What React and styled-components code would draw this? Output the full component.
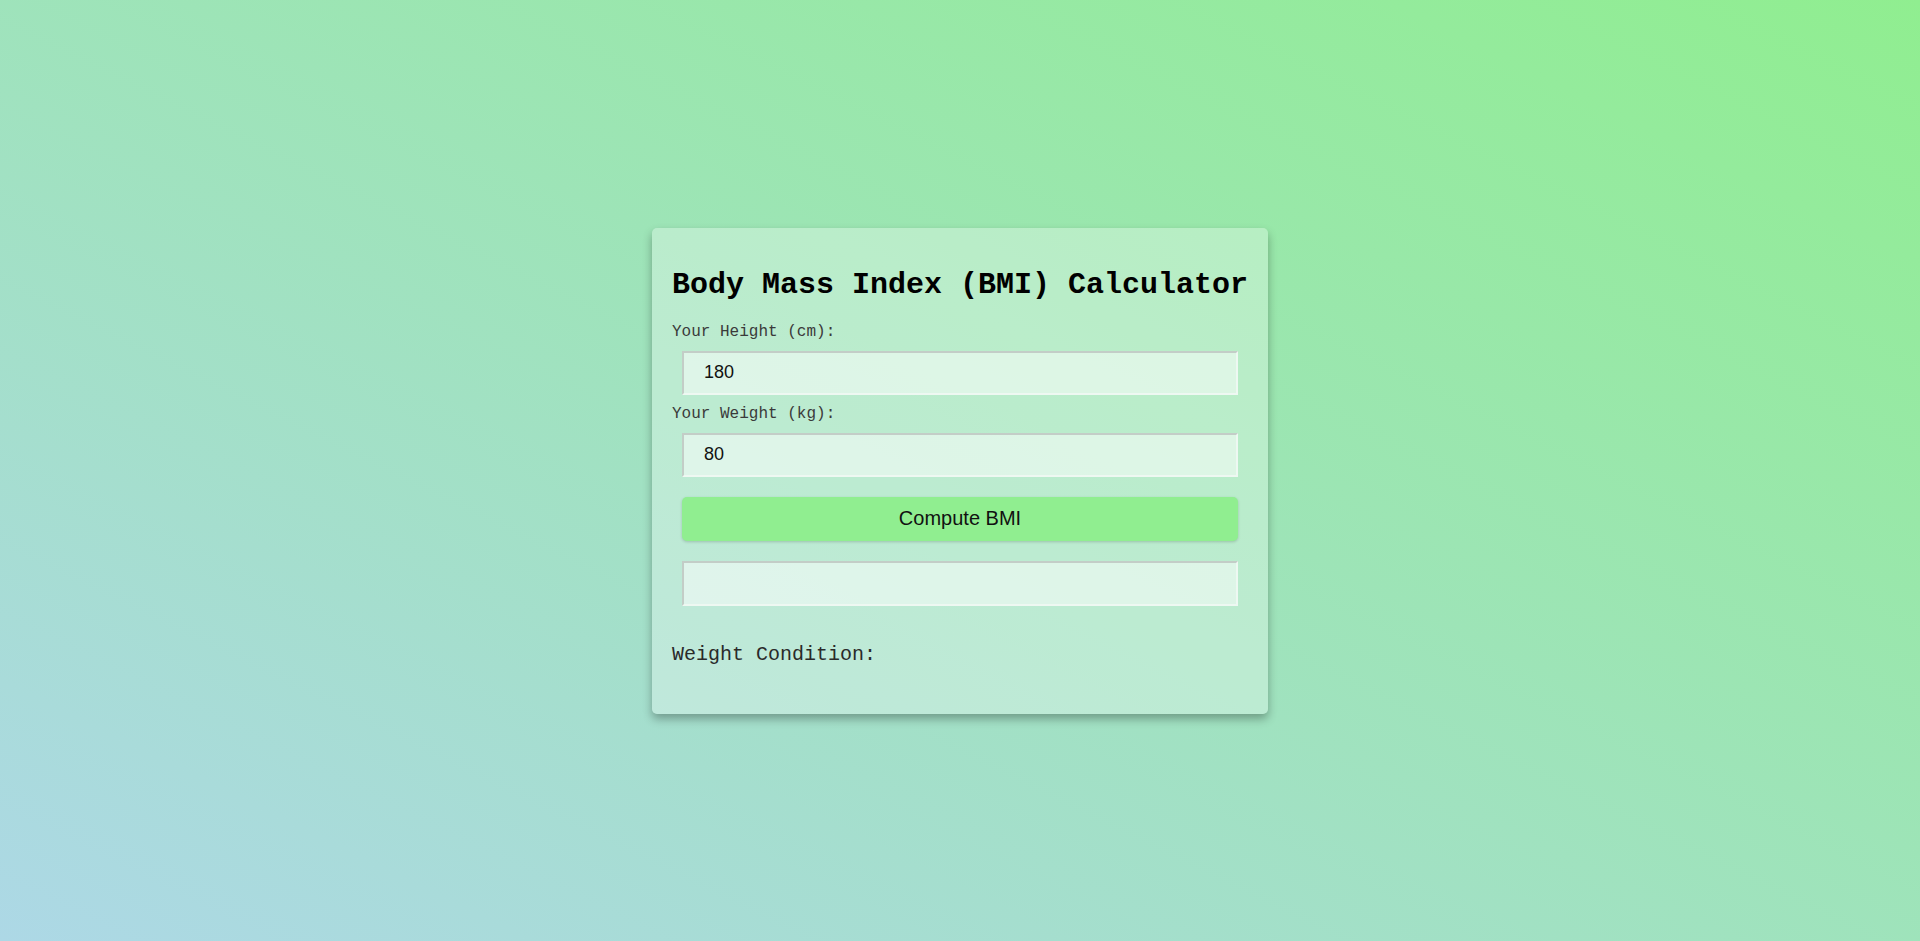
import React, { useState } from "react";
import styled, { createGlobalStyle } from "styled-components";

const GlobalStyle = createGlobalStyle`
  html, body { margin: 0; padding: 0; }
  body {
    min-height: 100vh;
    background: linear-gradient(to top right, #add8e6, #90ee90);
    font-family: "Liberation Mono", "Courier New", monospace;
  }
  * { box-sizing: border-box; }
`;

const Page = styled.div`
  min-height: 100vh;
  display: flex;
  align-items: center;
  justify-content: center;
`;

const Card = styled.div`
  width: 616px;
  padding: 20px;
  display: flex;
  flex-direction: column;
  background: rgba(255, 255, 255, 0.3);
  border-radius: 5px;
  box-shadow: 0 5px 10px rgba(0, 0, 0, 0.3);
`;

const Title = styled.h1`
  margin: 20px 0 21px;
  font-family: "Liberation Mono", "Courier New", monospace;
  font-size: 30px;
  font-weight: bold;
  color: #000;
  white-space: nowrap;
`;

const Label = styled.label`
  display: block;
  font-family: "Liberation Mono", "Courier New", monospace;
  font-size: 16px;
  color: #3a3a3a;
`;

const Field = styled.input`
  display: block;
  margin: 10px;
  height: ${(p) => (p.$tall ? "45px" : "44px")};
  padding: 0 20px;
  font-family: "Liberation Sans", Arial, sans-serif;
  font-size: 18px;
  color: #111;
  background: rgba(255, 255, 255, 0.5);
  border: 2px solid;
  border-color: #c3cdc7 #eef8f2 #eef8f2 #c3cdc7;
  outline: none;
`;

const Button = styled.button`
  margin: 10px;
  height: 44px;
  border: none;
  border-radius: 5px;
  background: #90ee90;
  box-shadow: 0 1px 3px rgba(0, 0, 0, 0.18);
  font-family: "Liberation Sans", Arial, sans-serif;
  font-size: 20px;
  color: #111;
  cursor: pointer;
`;

const Condition = styled.h4`
  margin: 27px 0 28px;
  font-family: "Liberation Mono", "Courier New", monospace;
  font-size: 20px;
  font-weight: normal;
  color: #2a2a2a;
`;

export default function App() {
  const [height, setHeight] = useState("180");
  const [weight, setWeight] = useState("80");
  const [bmi, setBmi] = useState("");
  const [cond, setCond] = useState("");

  const compute = () => {
    const h = parseFloat(height) / 100;
    const w = parseFloat(weight);
    if (!h || !w) return;
    const v = w / (h * h);
    setBmi(v.toFixed(1));
    setCond(v < 18.5 ? "Underweight" : v < 25 ? "Normal" : v < 30 ? "Overweight" : "Obese");
  };

  return (
    <>
      <GlobalStyle />
      <Page>
        <Card>
          <Title>Body Mass Index (BMI) Calculator</Title>
          <Label htmlFor="h">Your Height (cm):</Label>
          <Field id="h" value={height} onChange={(e) => setHeight(e.target.value)} />
          <Label htmlFor="w">Your Weight (kg):</Label>
          <Field id="w" value={weight} onChange={(e) => setWeight(e.target.value)} />
          <Button onClick={compute}>Compute BMI</Button>
          <Field $tall readOnly value={bmi} />
          <Condition>Weight Condition: {cond}</Condition>
        </Card>
      </Page>
    </>
  );
}
